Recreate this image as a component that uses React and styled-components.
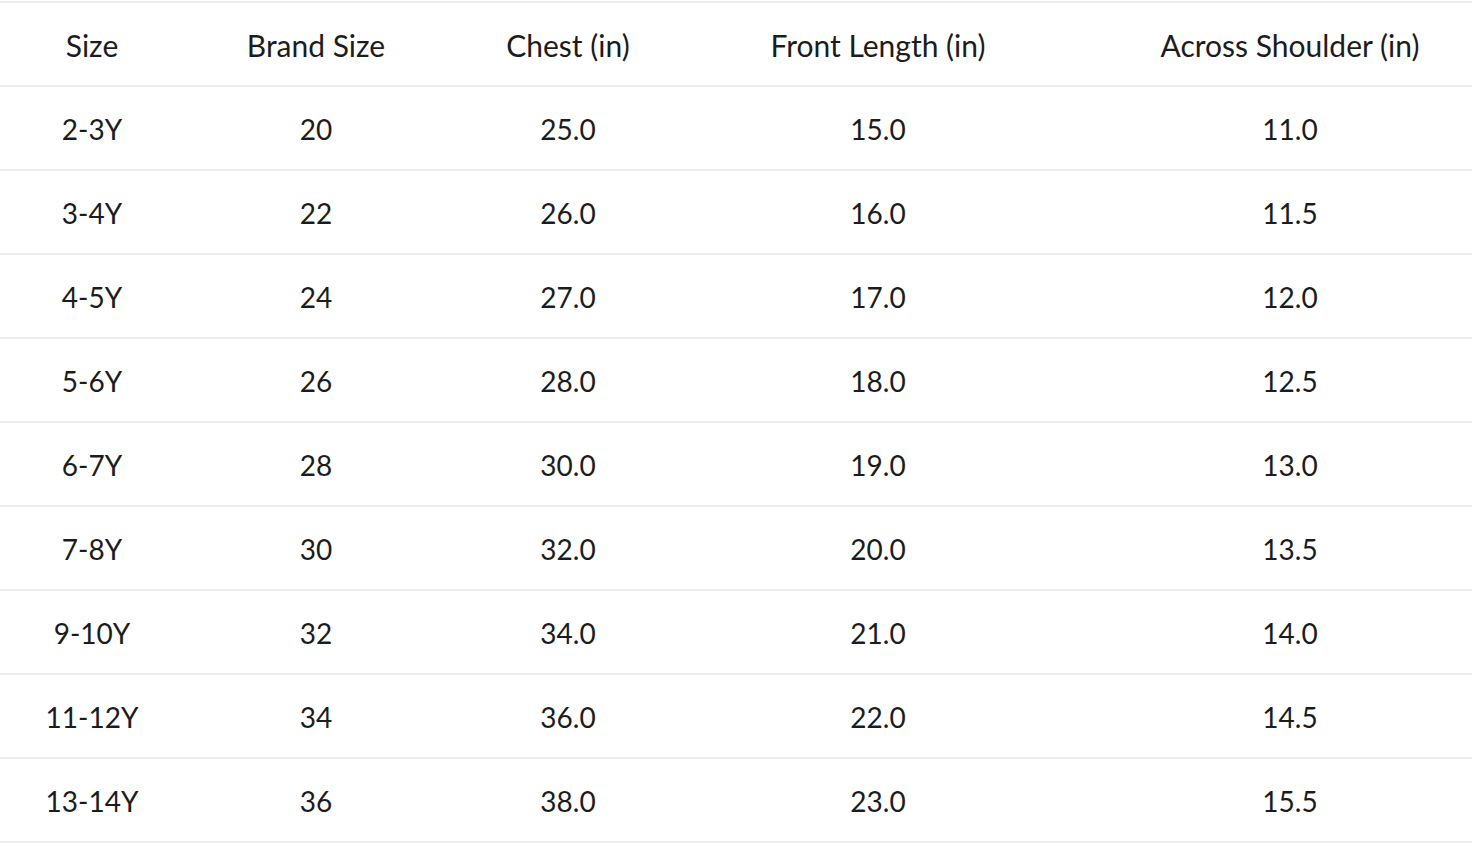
import React from 'react';
import styled, { createGlobalStyle } from 'styled-components';

const GlobalStyle = createGlobalStyle`
  body {
    margin: 0;
    background: #ffffff;
    font-family: "Lato", "Liberation Sans", sans-serif;
    color: #1c1c1c;
  }
`;

const columns = ['Size', 'Brand Size', 'Chest (in)', 'Front Length (in)', 'Across Shoulder (in)'];

const rows = [
  ['2-3Y', '20', '25.0', '15.0', '11.0'],
  ['3-4Y', '22', '26.0', '16.0', '11.5'],
  ['4-5Y', '24', '27.0', '17.0', '12.0'],
  ['5-6Y', '26', '28.0', '18.0', '12.5'],
  ['6-7Y', '28', '30.0', '19.0', '13.0'],
  ['7-8Y', '30', '32.0', '20.0', '13.5'],
  ['9-10Y', '32', '34.0', '21.0', '14.0'],
  ['11-12Y', '34', '36.0', '22.0', '14.5'],
  ['13-14Y', '36', '38.0', '23.0', '15.5'],
];

const Table = styled.div`
  margin-top: 1px;
  border-top: 2px solid #ececec;
  width: 1472px;
`;

const Row = styled.div`
  display: grid;
  grid-template-columns: 184px 264px 240px 380px 1fr;
  height: 84px;
  padding-top: 2px;
  box-sizing: border-box;
  align-items: center;
  border-bottom: 2px solid #ececec;
`;

const Cell = styled.div`
  text-align: center;
  font-size: ${props => (props.head ? 30 : 28)}px;
  line-height: 1;
  padding-left: ${props => props.shift || 0}px;
`;

function App() {
  return (
    <>
      <GlobalStyle />
      <Table>
        <Row>
          {columns.map((c, i) => (
            <Cell key={c} head shift={i === 4 ? 40 : 0}>{c}</Cell>
          ))}
        </Row>
        {rows.map(r => (
          <Row key={r[0]}>
            {r.map((v, i) => (
              <Cell key={i} shift={i === 4 ? 40 : 0}>{v}</Cell>
            ))}
          </Row>
        ))}
      </Table>
    </>
  );
}

export default App;
